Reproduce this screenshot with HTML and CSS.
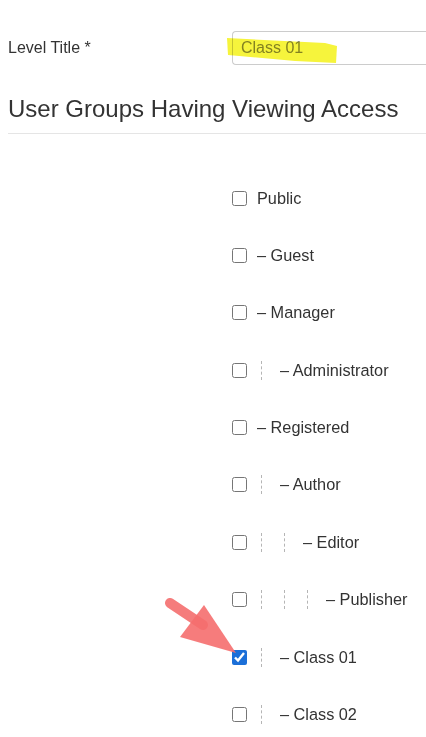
FILE: index.html
```html
<!DOCTYPE html>
<html lang="en">
<head>
    <meta charset="UTF-8">
    <meta name="viewport" content="width=device-width, initial-scale=1.0">
    <title>Access Level</title>
    <link rel="stylesheet" href="styles.css">
</head>
<body>
    <div class="page">
        <div class="form-row">
            <label for="title" class="form-label">Level Title *</label>
            <input type="text" id="title" class="form-input" value="Class 01">
        </div>

        <h2 class="section-title">User Groups Having Viewing Access</h2>

        <ul class="group-list">
            <li><input type="checkbox"><span>Public</span></li>
            <li><input type="checkbox"><span>&ndash; Guest</span></li>
            <li><input type="checkbox"><span>&ndash; Manager</span></li>
            <li><input type="checkbox"><i class="gi"></i><span>&ndash; Administrator</span></li>
            <li><input type="checkbox"><span>&ndash; Registered</span></li>
            <li><input type="checkbox"><i class="gi"></i><span>&ndash; Author</span></li>
            <li><input type="checkbox"><i class="gi"></i><i class="gi"></i><span>&ndash; Editor</span></li>
            <li><input type="checkbox"><i class="gi"></i><i class="gi"></i><i class="gi"></i><span>&ndash; Publisher</span></li>
            <li><input type="checkbox" checked><i class="gi"></i><span>&ndash; Class 01</span></li>
            <li><input type="checkbox"><i class="gi"></i><span>&ndash; Class 02</span></li>
        </ul>

        <!-- annotations drawn over the screenshot -->
        <svg class="highlight" width="120" height="30" viewBox="0 0 120 30">
            <polygon points="2,2 100,7 112,10 111,27 70,25 3,19" fill="#f6f43c"/>
        </svg>
        <svg class="arrow" width="80" height="60" viewBox="0 0 80 60">
            <line x1="12" y1="10" x2="45" y2="32" stroke="#f56e6e" stroke-width="10" stroke-linecap="round" opacity="0.9"/>
            <polygon points="46,12 22,44 78,60" fill="#f56e6e" opacity="0.9"/>
        </svg>
    </div>
</body>
</html>
```

FILE: styles.css
```css
html, body {
    margin: 0;
    overflow: hidden;
}
body {
    background-color: white;
    font-family: "Liberation Sans", Arial, sans-serif;
    color: #333;
}
.page {
    position: relative;
    box-sizing: border-box;
    width: 426px;
    padding: 31px 0 0 8px;
}
.form-row {
    display: flex;
    align-items: center;
}
.form-label {
    width: 224px;
    font-size: 16px;
}
.form-input {
    flex: 1;
    min-width: 0;
    height: 34px;
    box-sizing: border-box;
    border: 1px solid #ccc;
    border-right: none;
    border-radius: 4px 0 0 4px;
    padding: 0 8px;
    font-family: inherit;
    font-size: 16px;
    color: #888;
}
.section-title {
    margin: 31px 0 0 0;
    padding-bottom: 11px;
    border-bottom: 1px solid #e5e5e5;
    font-size: 24px;
    font-weight: normal;
    line-height: 26px;
}
.group-list {
    list-style: none;
    margin: 54px 0 0 224px;
    padding: 0;
    display: flex;
    flex-direction: column;
    gap: 37.4px;
}
.group-list li {
    display: flex;
    align-items: center;
    height: 20px;
    font-size: 16.3px;
}
.group-list input {
    width: 15px;
    height: 15px;
    margin: 0 10px 0 0;
    accent-color: #1b6fd8;
}
.gi {
    display: inline-block;
    width: 18px;
    height: 19px;
    margin-left: 4px;
    border-left: 1px dashed #b5b5b5;
}
.highlight {
    position: absolute;
    left: 225px;
    top: 36px;
    mix-blend-mode: multiply;
}
.arrow {
    position: absolute;
    left: 158px;
    top: 593px;
}
```
